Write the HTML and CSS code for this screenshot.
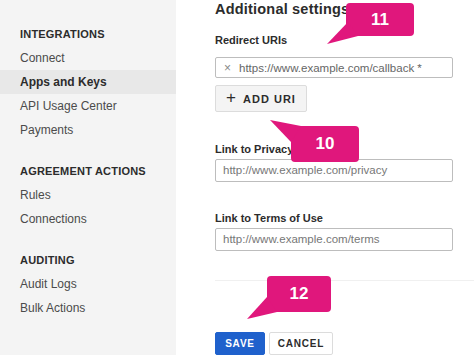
FILE: index.html
```html
<!DOCTYPE html>
<html lang="en">
<head>
  <meta charset="UTF-8" />
  <title>Additional settings</title>
  <link rel="stylesheet" href="styles.css">
</head>
<body>

  <!-- Left nav -->
  <nav class="sidebar">
    <div class="nav-section">
      <div class="nav-head">INTEGRATIONS</div>
      <div class="nav-item">Connect</div>
      <div class="nav-item active">Apps and Keys</div>
      <div class="nav-item">API Usage Center</div>
      <div class="nav-item">Payments</div>
    </div>
    <div class="nav-section">
      <div class="nav-head">AGREEMENT ACTIONS</div>
      <div class="nav-item">Rules</div>
      <div class="nav-item">Connections</div>
    </div>
    <div class="nav-section">
      <div class="nav-head">AUDITING</div>
      <div class="nav-item">Audit Logs</div>
      <div class="nav-item">Bulk Actions</div>
    </div>
  </nav>

  <!-- Settings form -->
  <main class="main">
    <h2 class="title">Additional settings</h2>

    <div class="field-label first">Redirect URIs</div>
    <div class="uri-input">
      <span class="uri-x">×</span>
      <span>https://www.example.com/callback *</span>
    </div>
    <button class="add-btn"><span class="plus">+</span>ADD URI</button>

    <div class="field-label privacy">Link to Privacy</div>
    <div class="text-input">http://www.example.com/privacy</div>

    <div class="field-label terms">Link to Terms of Use</div>
    <div class="text-input">http://www.example.com/terms</div>

    <hr class="divider">

    <div class="actions">
      <button class="btn btn-save">SAVE</button>
      <button class="btn btn-cancel">CANCEL</button>
    </div>
  </main>

  <!-- Numbered callouts -->
  <div class="callout c11">
    <svg class="tail" width="1" height="1"><polygon points="2,19 -19,41 12,33" /></svg>
    <span>11</span>
  </div>
  <div class="callout c10">
    <svg class="tail" width="1" height="1"><polygon points="0,16 -21,-6 10,0" /></svg>
    <span>10</span>
  </div>
  <div class="callout c12">
    <svg class="tail" width="1" height="1"><polygon points="0,21 -20,43 10,36" /></svg>
    <span>12</span>
  </div>

</body>
</html>
```

FILE: styles.css
```css
body {
  margin: 0;
  position: relative;
  display: flex;
  width: 474px;
  height: 358px;
  overflow: hidden;
  background: #fff;
  font-family: "Liberation Sans", Arial, sans-serif;
  color: #333;
}

/* Sidebar */
.sidebar {
  width: 176px;
  height: 355px;
  flex-shrink: 0;
  background: #f4f4f4;
  padding-top: 22px;
  box-sizing: border-box;
}

.nav-section {
  margin-bottom: 17px;
}

.nav-head,
.nav-item {
  height: 24px;
  line-height: 24px;
  padding-left: 20px;
}

.nav-head {
  font-size: 11px;
  font-weight: bold;
  color: #2c2c2c;
  letter-spacing: 0.2px;
}

.nav-item {
  font-size: 12px;
  color: #4b4b4b;
}

.nav-item.active {
  background: #e8e8e8;
  font-weight: bold;
  color: #2c2c2c;
}

/* Main */
.main {
  padding-left: 39px;
  flex: 1;
}

.title {
  margin: 0;
  font-size: 14.5px;
  line-height: 18px;
  font-weight: bold;
  color: #2c2c2c;
  letter-spacing: 0.2px;
}

.field-label {
  font-size: 11px;
  font-weight: bold;
  line-height: 14px;
  color: #2c2c2c;
}

.field-label.first { margin-top: 15px; }
.field-label.privacy { margin-top: 30px; }
.field-label.terms { margin-top: 29px; }

.uri-input {
  margin-top: 10px;
  width: 238px;
  height: 21px;
  box-sizing: border-box;
  border: 1px solid #bdbdbd;
  border-radius: 2px;
  display: flex;
  align-items: center;
  gap: 8px;
  padding-left: 8px;
  font-size: 11.5px;
  color: #666;
}

.uri-x {
  color: #888;
  font-size: 12px;
}

.add-btn {
  margin-top: 7px;
  width: 92px;
  height: 27px;
  background: #f4f4f4;
  border: 1px solid #dcdcdc;
  border-radius: 2px;
  font-family: "Liberation Sans", Arial, sans-serif;
  font-size: 11px;
  font-weight: bold;
  letter-spacing: 1px;
  color: #2c2c2c;
  display: flex;
  align-items: center;
  justify-content: center;
  gap: 6px;
  padding: 0;
}

.plus {
  font-size: 17px;
  font-weight: normal;
  line-height: 1;
  margin-top: -2px;
}

.text-input {
  margin-top: 3px;
  width: 238px;
  height: 23px;
  box-sizing: border-box;
  border: 1px solid #bdbdbd;
  border-radius: 2px;
  padding-left: 7px;
  line-height: 21px;
  font-size: 11.5px;
  color: #777;
}

.divider {
  margin: 29px 0 0 0;
  border: 0;
  border-top: 1px solid #f0f0f0;
}

.actions {
  margin-top: 51px;
  display: flex;
  gap: 4px;
}

.btn {
  height: 23px;
  padding: 0;
  border-radius: 2px;
  font-family: "Liberation Sans", Arial, sans-serif;
  font-size: 10px;
  font-weight: bold;
  letter-spacing: 0.8px;
}

.btn-save {
  width: 50px;
  background: #1f61cc;
  border: 1px solid #1f61cc;
  color: #fff;
}

.btn-cancel {
  width: 64px;
  background: #fff;
  border: 1px solid #dcdcdc;
  color: #2c2c2c;
}

/* Callouts */
.callout {
  position: absolute;
  background: #e0177c;
  border-radius: 4px;
  color: #fff;
  font-size: 17px;
  font-weight: bold;
  display: flex;
  align-items: center;
  justify-content: center;
}

.callout span {
  position: relative;
}

.tail {
  position: absolute;
  left: 0;
  top: 0;
  overflow: visible;
}

.tail polygon {
  fill: #e0177c;
}

.c11 { left: 346px; top: 3px; width: 68px; height: 33px; }
.c10 { left: 291px; top: 126px; width: 68px; height: 36px; }
.c12 { left: 267px; top: 276px; width: 64px; height: 36px; }
```
